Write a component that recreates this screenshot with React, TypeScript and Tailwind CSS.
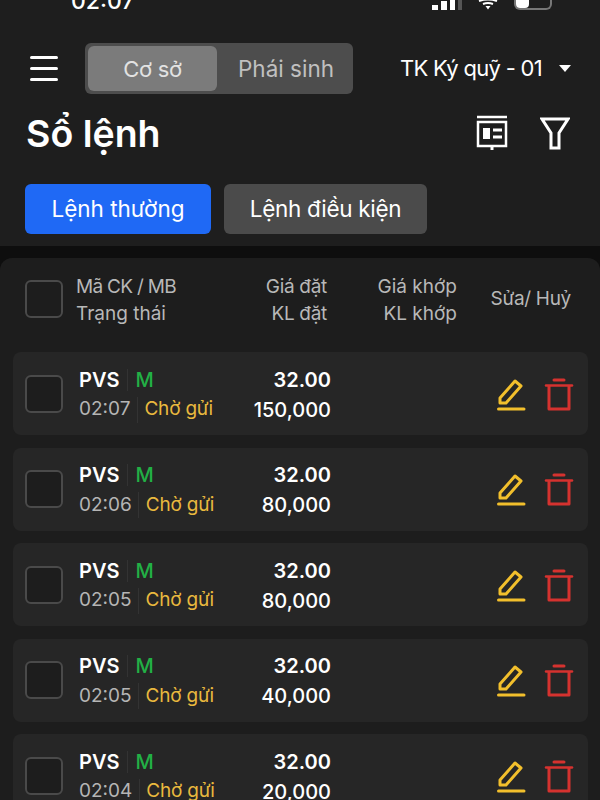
const orders = [
  { time: "02:07", qty: "150,000" },
  { time: "02:06", qty: "80,000" },
  { time: "02:05", qty: "80,000" },
  { time: "02:05", qty: "40,000" },
  { time: "02:04", qty: "20,000" },
];

const Checkbox = () => (
  <div className="h-[38px] w-[38px] shrink-0 rounded-md border-2 border-[#4a4a4a] bg-[#1d1d1d]" />
);

const PencilIcon = () => (
  <svg width="30" height="34" viewBox="0 0 30 34" fill="none" stroke="#f2bf2c" strokeWidth="3">
    <path d="M4 20 L19 3 L25 8 L10 25 L4 25 Z" strokeLinejoin="round" />
    <path d="M2.5 31 H28" strokeLinecap="round" />
  </svg>
);

const TrashIcon = () => (
  <svg width="30" height="34" viewBox="0 0 30 34" fill="none" stroke="#d5322f" strokeWidth="3">
    <path d="M10 2 H20" strokeLinecap="round" />
    <path d="M2 7.5 H28" strokeLinecap="round" strokeWidth="2.5" />
    <path d="M5 8 V31 H25 V8" strokeLinejoin="round" />
  </svg>
);

const OrderRow = ({ time, qty }: { time: string; qty: string }) => (
  <div className="flex h-[83px] items-center rounded-lg bg-[#262626] pl-3 pr-[14px]">
    <Checkbox />
    <div className="ml-4 flex w-[252px] items-center justify-between pt-[3px]">
      <div className="flex flex-col gap-[3px]">
        <div className="flex h-[26px] items-center pb-[2px]">
          <span className="text-[20px] font-semibold text-white">PVS</span>
          <span className="mx-[7.5px] h-[22px] w-px bg-[#333333]" />
          <span className="text-[20px] font-medium text-[#22b045]">M</span>
        </div>
        <div className="flex h-[26px] items-center">
          <span className="text-[19px] text-[#b5b5b5]">{time}</span>
          <span className="mx-[6.5px] h-[26px] w-px bg-[#333333]" />
          <span className="text-[19px] tracking-[-0.2px] text-[#e9b93e]">Chờ gửi</span>
        </div>
      </div>
      <div className="flex flex-col items-end gap-[3px] text-[20px] font-medium text-white">
        <span className="flex h-[26px] items-center pb-[2px] font-semibold">32.00</span>
        <span className="flex h-[26px] items-center">{qty}</span>
      </div>
    </div>
    <div className="ml-auto flex items-center gap-[18px] pt-[2px]">
      <PencilIcon />
      <TrashIcon />
    </div>
  </div>
);

export default function App() {
  return (
    <div className="h-[800px] w-[600px] overflow-hidden bg-[#0e0e0e] font-['Inter',sans-serif]">
      <div className="h-[246px] bg-[#1e1e1e]">
        <div className="flex h-[10px] items-end justify-between pl-[71px] pr-[48px]">
          <span className="text-[23px] leading-[18px] font-medium text-white">02:07</span>
          <div className="flex items-end gap-[16px]">
            <div className="flex items-end gap-[3px]">
              <span className="h-[5px] w-[6px] bg-white" />
              <span className="h-[9px] w-[6px] bg-white" />
              <span className="h-[10px] w-[5px] bg-white" />
              <span className="h-[10px] w-[4px] bg-[#555555]" />
            </div>
            <svg width="20" height="11" viewBox="0 0 20 11" fill="none" stroke="#ffffff" strokeWidth="2">
              <path d="M1 2 Q10 -1 19 2" />
              <path d="M5 5 Q10 3 15 5" />
              <path d="M7.5 7 H12.5 L10 10.5 Z" fill="#ffffff" stroke="none" />
            </svg>
            <div className="h-[10px] w-[38px] rounded-b-md border-2 border-t-0 border-[#777777]">
              <div className="h-[8px] w-[13px] rounded-b-sm bg-white" />
            </div>
          </div>
        </div>

        <div className="mt-[33px] flex items-center pl-[30px]">
          <div className="flex h-[25px] w-[28px] flex-col justify-between">
            <span className="h-[3px] rounded-full bg-white" />
            <span className="h-[3px] rounded-full bg-white" />
            <span className="h-[3px] rounded-full bg-white" />
          </div>
          <div className="ml-[27px] flex h-[51px] w-[268px] rounded-md bg-[#4d4d4d] p-[3px]">
            <div className="flex w-[129px] items-center justify-center rounded-md bg-[#7b7b7b] pt-[1px] text-[22px] tracking-[-0.3px] text-[#e2e2e2]">
              Cơ sở
            </div>
            <div className="flex flex-1 items-center justify-center pl-[5px] pt-[1px] text-[22.5px] text-[#c0c0c0]">
              Phái sinh
            </div>
          </div>
          <span className="ml-[47px] text-[22px] tracking-[-0.7px] text-white">TK Ký quỹ - 01</span>
          <svg className="ml-[17px]" width="12" height="7" viewBox="0 0 12 7" fill="#ffffff">
            <path d="M0 0 H12 L6 7 Z" />
          </svg>
        </div>

        <div className="mt-[12px] flex h-[54px] items-center pl-[26px] pr-[30px]">
          <h1 className="pt-[2px] text-[37.5px] font-semibold text-white">Sổ lệnh</h1>
          <svg className="ml-auto" width="32" height="36" viewBox="0 0 32 36" fill="none" stroke="#ffffff" strokeWidth="2.5">
            <path d="M1 2 H31" />
            <rect x="2" y="7" width="28" height="24" />
            <rect x="7" y="13" width="7" height="11" fill="#ffffff" stroke="none" />
            <path d="M17 15 H26 M17 22 H26" strokeWidth="3" />
            <path d="M16 31 V35" strokeWidth="3" />
          </svg>
          <svg className="ml-[32px]" width="30" height="34" viewBox="0 0 30 34" fill="none" stroke="#ffffff" strokeWidth="3" strokeLinejoin="miter">
            <path d="M2 3 H28 L19 17 V32 H11 V17 Z" />
          </svg>
        </div>

        <div className="mt-[24px] flex gap-[13px] pl-[25px]">
          <button className="h-[50px] w-[186px] rounded-md bg-[#1f69f5] text-[22.5px] text-white">Lệnh thường</button>
          <button className="h-[50px] w-[203px] rounded-md bg-[#4b4b4b] text-[22.5px] tracking-[-0.3px] text-white">Lệnh điều kiện</button>
        </div>
      </div>

      <div className="mt-[12px] h-[600px] rounded-t-xl bg-[#1d1d1d]">
        <div className="flex h-[82px] items-center pl-[25px] pr-[29px] text-[19px] leading-[24px] text-[#b8b8b8]">
          <Checkbox />
          <div className="ml-[13px] flex w-[251px] justify-between pt-[2px]">
            <div className="flex flex-col gap-[3px]">
              <span className="tracking-[-0.7px]">Mã CK / MB</span>
              <span>Trạng thái</span>
            </div>
            <div className="flex flex-col items-end gap-[3px]">
              <span className="tracking-[-0.3px]">Giá đặt</span>
              <span className="tracking-[-0.3px]">KL đặt</span>
            </div>
          </div>
          <div className="flex w-[130px] flex-col items-end gap-[3px] pt-[2px]">
            <span>Giá khớp</span>
            <span>KL khớp</span>
          </div>
          <span className="ml-auto tracking-[-0.3px]">Sửa/ Huỷ</span>
        </div>
        <div className="mt-[12px] flex flex-col gap-[12.5px] pl-[13px] pr-[12px]">
          {orders.map((order, i) => (
            <OrderRow key={i} time={order.time} qty={order.qty} />
          ))}
        </div>
      </div>
    </div>
  );
}
